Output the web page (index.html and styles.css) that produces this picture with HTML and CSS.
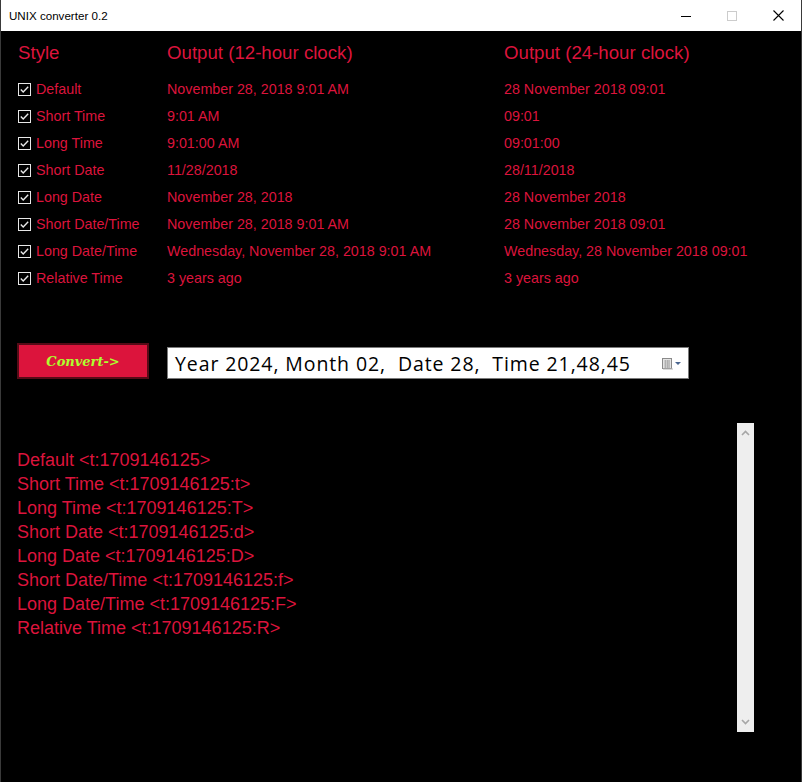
FILE: index.html
```html
<!DOCTYPE html>
<html>
<head>
<meta charset="utf-8">
<title>UNIX converter 0.2</title>
<link rel="stylesheet" href="styles.css">
</head>
<body>
<div class="window">
  <div class="titlebar">
    <span class="title">UNIX converter 0.2</span>
    <div class="caption">
      <span class="cbtn"><svg width="10" height="10" viewBox="0 0 10 10"><line x1="0" y1="5.5" x2="10" y2="5.5" stroke="#000" stroke-width="1"/></svg></span>
      <span class="cbtn"><svg width="10" height="10" viewBox="0 0 10 10"><rect x="0.5" y="0.5" width="9" height="9" fill="none" stroke="#cccccc" stroke-width="1"/></svg></span>
      <span class="cbtn"><svg width="11" height="11" viewBox="0 0 11 11"><path d="M0.5 0.5 L10.5 10.5 M10.5 0.5 L0.5 10.5" stroke="#000" stroke-width="1.1"/></svg></span>
    </div>
  </div>
  <div class="content">
    <div class="table">
      <div class="head">Style</div>
      <div class="head">Output (12-hour clock)</div>
      <div class="head">Output (24-hour clock)</div>

      <div class="cell style"><svg class="chk" width="13" height="13" viewBox="0 0 13 13"><rect x="0.5" y="0.5" width="12" height="12" fill="#000" stroke="#e8e8e8"/><path d="M2.8 6.6 L5.2 9 L10.2 3.8" fill="none" stroke="#e8e8e8" stroke-width="1.4"/></svg>Default</div>
      <div class="cell">November 28, 2018 9:01 AM</div>
      <div class="cell">28 November 2018 09:01</div>

      <div class="cell style"><svg class="chk" width="13" height="13" viewBox="0 0 13 13"><rect x="0.5" y="0.5" width="12" height="12" fill="#000" stroke="#e8e8e8"/><path d="M2.8 6.6 L5.2 9 L10.2 3.8" fill="none" stroke="#e8e8e8" stroke-width="1.4"/></svg>Short Time</div>
      <div class="cell">9:01 AM</div>
      <div class="cell">09:01</div>

      <div class="cell style"><svg class="chk" width="13" height="13" viewBox="0 0 13 13"><rect x="0.5" y="0.5" width="12" height="12" fill="#000" stroke="#e8e8e8"/><path d="M2.8 6.6 L5.2 9 L10.2 3.8" fill="none" stroke="#e8e8e8" stroke-width="1.4"/></svg>Long Time</div>
      <div class="cell">9:01:00 AM</div>
      <div class="cell">09:01:00</div>

      <div class="cell style"><svg class="chk" width="13" height="13" viewBox="0 0 13 13"><rect x="0.5" y="0.5" width="12" height="12" fill="#000" stroke="#e8e8e8"/><path d="M2.8 6.6 L5.2 9 L10.2 3.8" fill="none" stroke="#e8e8e8" stroke-width="1.4"/></svg>Short Date</div>
      <div class="cell">11/28/2018</div>
      <div class="cell">28/11/2018</div>

      <div class="cell style"><svg class="chk" width="13" height="13" viewBox="0 0 13 13"><rect x="0.5" y="0.5" width="12" height="12" fill="#000" stroke="#e8e8e8"/><path d="M2.8 6.6 L5.2 9 L10.2 3.8" fill="none" stroke="#e8e8e8" stroke-width="1.4"/></svg>Long Date</div>
      <div class="cell">November 28, 2018</div>
      <div class="cell">28 November 2018</div>

      <div class="cell style"><svg class="chk" width="13" height="13" viewBox="0 0 13 13"><rect x="0.5" y="0.5" width="12" height="12" fill="#000" stroke="#e8e8e8"/><path d="M2.8 6.6 L5.2 9 L10.2 3.8" fill="none" stroke="#e8e8e8" stroke-width="1.4"/></svg>Short Date/Time</div>
      <div class="cell">November 28, 2018 9:01 AM</div>
      <div class="cell">28 November 2018 09:01</div>

      <div class="cell style"><svg class="chk" width="13" height="13" viewBox="0 0 13 13"><rect x="0.5" y="0.5" width="12" height="12" fill="#000" stroke="#e8e8e8"/><path d="M2.8 6.6 L5.2 9 L10.2 3.8" fill="none" stroke="#e8e8e8" stroke-width="1.4"/></svg>Long Date/Time</div>
      <div class="cell">Wednesday, November 28, 2018 9:01 AM</div>
      <div class="cell">Wednesday, 28 November 2018 09:01</div>

      <div class="cell style"><svg class="chk" width="13" height="13" viewBox="0 0 13 13"><rect x="0.5" y="0.5" width="12" height="12" fill="#000" stroke="#e8e8e8"/><path d="M2.8 6.6 L5.2 9 L10.2 3.8" fill="none" stroke="#e8e8e8" stroke-width="1.4"/></svg>Relative Time</div>
      <div class="cell">3 years ago</div>
      <div class="cell">3 years ago</div>
    </div>

    <div class="controls">
      <button class="convert">Convert-&gt;</button>
      <div class="picker">
        <span class="ptext">Year 2024, Month 02,&nbsp; Date 28,&nbsp; Time 21,48,45</span>
        <svg class="cal" width="22" height="12" viewBox="0 0 22 12">
          <rect x="0.5" y="0.5" width="9" height="10" fill="#e4e4e4" stroke="#8a8a8a"/>
          <path d="M2 3H8M2 5H8M2 7H8M2 9H8M3.5 2V10M5.5 2V10M7 2V10" stroke="#a8a8a8" stroke-width="0.8"/>
          <rect x="1" y="10.5" width="10" height="1" fill="#b8b8b8"/>
          <path d="M13 4 L19 4 L16 7 Z" fill="#4a6690"/>
        </svg>
      </div>
    </div>

    <div class="output">
      <div class="otext">
        <div>Default &lt;t:1709146125&gt;</div>
        <div>Short Time &lt;t:1709146125:t&gt;</div>
        <div>Long Time &lt;t:1709146125:T&gt;</div>
        <div>Short Date &lt;t:1709146125:d&gt;</div>
        <div>Long Date &lt;t:1709146125:D&gt;</div>
        <div>Short Date/Time &lt;t:1709146125:f&gt;</div>
        <div>Long Date/Time &lt;t:1709146125:F&gt;</div>
        <div>Relative Time &lt;t:1709146125:R&gt;</div>
      </div>
      <div class="scrollbar">
        <svg width="9" height="6" viewBox="0 0 9 6"><path d="M1 5 L4.5 1.5 L8 5" fill="none" stroke="#a6a6a6" stroke-width="1.6"/></svg>
        <svg width="9" height="6" viewBox="0 0 9 6"><path d="M1 1 L4.5 4.5 L8 1" fill="none" stroke="#a6a6a6" stroke-width="1.6"/></svg>
      </div>
    </div>
  </div>
</div>
</body>
</html>
```

FILE: styles.css
```css
* { box-sizing: border-box; }
html, body { margin: 0; padding: 0; background: #000; }
.window {
  width: 802px;
  height: 782px;
  display: flex;
  flex-direction: column;
  background: #000;
  border-left: 1px solid #3a3a3a;
  border-right: 1px solid #3a3a3a;
  overflow: hidden;
}
.titlebar {
  height: 31px;
  flex: none;
  background: #fff;
  display: flex;
  align-items: center;
  justify-content: space-between;
  font-family: "Liberation Sans", Arial, sans-serif;
  font-size: 11.6px;
  color: #000;
}
.title { padding-left: 8px; }
.caption { display: flex; height: 100%; }
.cbtn {
  width: 46px;
  height: 100%;
  display: flex;
  align-items: center;
  justify-content: center;
}
.content {
  flex: 1;
  padding: 8px 0 0 16px;
  color: #dc143c;
  font-family: "Liberation Sans", Arial, sans-serif;
}
.table {
  display: grid;
  grid-template-columns: 149px 337px 1fr;
  grid-template-rows: 37px;
  grid-auto-rows: 27px;
  margin-left: 1px;
}
.head {
  font-size: 18.67px;
  line-height: 27px;
  height: 27px;
}
.cell {
  font-size: 14.3px;
  line-height: 27px;
  white-space: nowrap;
}
.style { display: flex; align-items: center; }
.chk { margin-right: 5px; margin-top: -1px; flex: none; }
.controls {
  display: flex;
  align-items: flex-end;
  gap: 18px;
  margin-top: 51px;
}
.convert {
  width: 132px;
  height: 36px;
  background: #dc143c;
  border: 2px solid #560b17;
  color: #adff2f;
  font-family: "DejaVu Serif", serif;
  font-weight: bold;
  font-style: italic;
  font-size: 13px;
  padding: 0;
}
.picker {
  width: 522px;
  height: 32px;
  background: #fff;
  border: 1px solid #7a7a7a;
  display: flex;
  align-items: center;
  justify-content: space-between;
  padding: 0 4px 0 7px;
}
.ptext {
  font-family: "Open Sans", sans-serif;
  font-size: 19.5px;
  letter-spacing: 0.9px;
  color: #000;
  white-space: nowrap;
}
.cal { flex: none; margin-top: 1px; }
.output {
  margin-top: 44px;
  width: 737px;
  height: 309px;
  display: flex;
}
.otext {
  flex: 1;
  padding: 25px 0 0 0;
  font-size: 18px;
  line-height: 24px;
}
.scrollbar {
  width: 17px;
  background: #eeeeee;
  display: flex;
  flex-direction: column;
  justify-content: space-between;
  align-items: center;
  padding: 7px 0 7px;
}
```
